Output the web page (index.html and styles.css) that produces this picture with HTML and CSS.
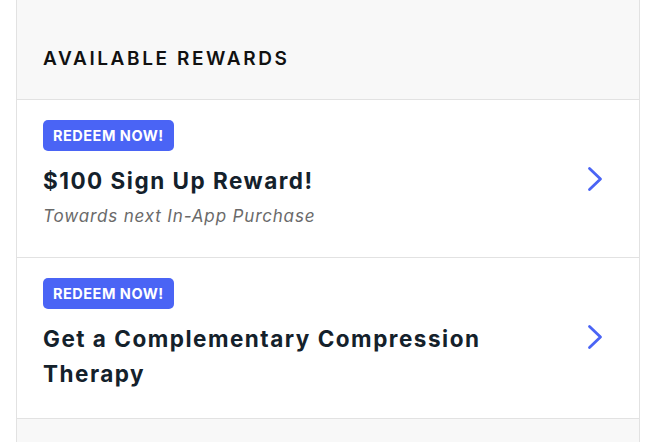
FILE: index.html
```html
<!DOCTYPE html>
<html>
<head>
<meta charset="utf-8">
<link rel="stylesheet" href="styles.css">
</head>
<body>
<div class="panel">
  <div class="section-head">
    <h2 class="section-title">AVAILABLE REWARDS</h2>
  </div>
  <div class="reward">
    <div class="reward-body">
      <span class="badge">REDEEM NOW!</span>
      <div class="title-row">
        <h3 class="reward-title">$100 Sign Up Reward!</h3>
        <svg class="chevron" viewBox="0 0 16 26" width="16" height="26"><path d="M2.5 2.5 L13.5 13 L2.5 23.5" fill="none" stroke="#4a64f5" stroke-width="2.8" stroke-linecap="round" stroke-linejoin="round"/></svg>
      </div>
      <p class="reward-sub">Towards next In-App Purchase</p>
    </div>
  </div>
  <div class="reward">
    <div class="reward-body">
      <span class="badge">REDEEM NOW!</span>
      <div class="title-row">
        <h3 class="reward-title">Get a Complementary Compression Therapy</h3>
        <svg class="chevron" viewBox="0 0 16 26" width="16" height="26"><path d="M2.5 2.5 L13.5 13 L2.5 23.5" fill="none" stroke="#4a64f5" stroke-width="2.8" stroke-linecap="round" stroke-linejoin="round"/></svg>
      </div>
    </div>
  </div>
  <div class="section-foot"></div>
</div>
</body>
</html>
```

FILE: styles.css
```css
html, body {
  margin: 0;
  padding: 0;
  background: #ffffff;
}
body {
  font-family: "Inter", "Noto Sans", "Liberation Sans", sans-serif;
  color: #14212b;
}
.panel {
  margin-left: 16px;
  width: 622px;
  border-left: 1px solid #e2e2e2;
  border-right: 1px solid #e2e2e2;
  height: 442px;
  background: #f8f8f8;
}
.section-head {
  height: 100px;
  border-bottom: 1px solid #e2e2e2;
  display: flex;
  align-items: center;
  padding: 0 26px;
  box-sizing: border-box;
}
.section-title {
  margin: 18px 0 0 0;
  font-size: 19px;
  font-weight: 600;
  letter-spacing: 2.6px;
  color: #111111;
}
.reward {
  background: #ffffff;
  border-bottom: 1px solid #e2e2e2;
  padding: 20px 26px 27px;
}
.reward-body {
  display: flex;
  flex-direction: column;
  align-items: flex-start;
}
.badge {
  display: inline-flex;
  align-items: center;
  height: 31px;
  padding: 0 10px;
  border-radius: 5px;
  background: #4a64f5;
  color: #ffffff;
  font-size: 14.5px;
  font-weight: 700;
  letter-spacing: 0.5px;
  box-sizing: border-box;
}
.title-row {
  margin-top: 12px;
  display: flex;
  align-items: flex-start;
  justify-content: space-between;
  width: 100%;
}
.reward-title {
  margin: 0;
  font-size: 22.5px;
  line-height: 35px;
  font-weight: 700;
  letter-spacing: 1.5px;
  max-width: 500px;
}
.chevron {
  flex: none;
  margin-top: 3px;
  margin-right: 10px;
}
.reward-sub {
  margin: 4px 0 0 0;
  font-size: 17px;
  line-height: 28px;
  font-style: italic;
  letter-spacing: 0.85px;
  color: #6a6a6a;
}
.section-foot {
  height: 24px;
}
```
